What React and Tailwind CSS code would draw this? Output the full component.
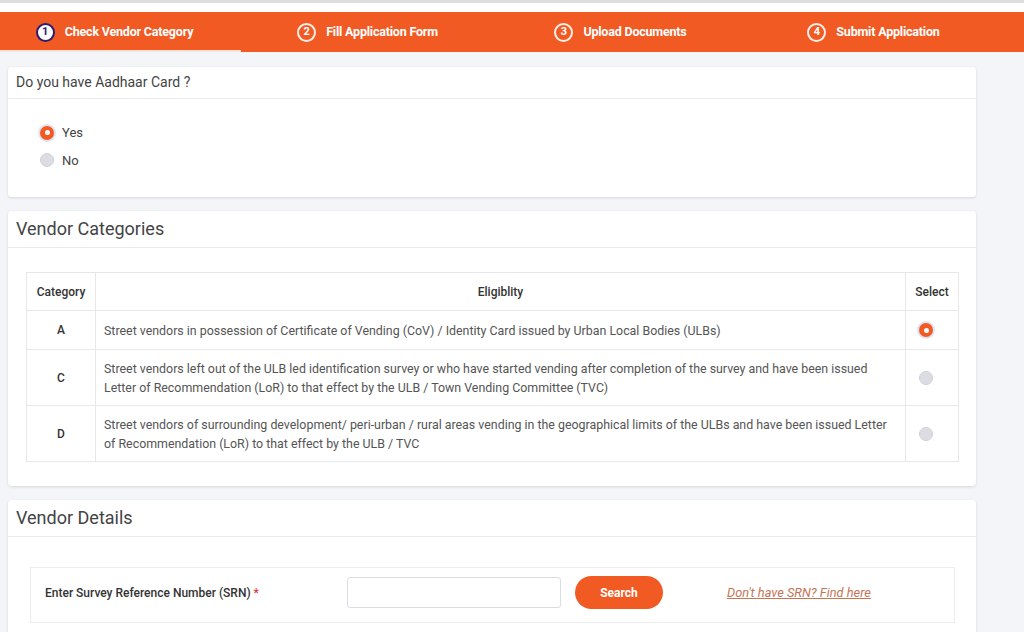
import React from "react";

const ORANGE = "bg-[#f15a22]";

function StepCircle({ n, active }) {
  return active ? (
    <span className="flex h-[19px] w-[19px] items-center justify-center rounded-full border-2 border-[#2b1d6e] bg-white text-[11px] font-bold text-[#2b1d6e]">
      {n}
    </span>
  ) : (
    <span className="flex h-[19px] w-[19px] items-center justify-center rounded-full border-2 border-white/90 text-[11px] font-bold text-white">
      {n}
    </span>
  );
}

function Radio({ checked }) {
  return checked ? (
    <span className="flex h-[14px] w-[14px] items-center justify-center rounded-full bg-[#f15a22] shadow-[0_0_0_2px_rgba(200,210,235,0.6)]">
      <span className="h-[5px] w-[5px] rounded-full bg-white" />
    </span>
  ) : (
    <span className="h-[14px] w-[14px] rounded-full border border-[#d0d2d8] bg-[#dcdde2]" />
  );
}

function Card({ title, big, children, className = "" }) {
  return (
    <div className={`rounded-[4px] bg-white shadow-[0_1px_3px_rgba(0,0,0,0.12)] ${className}`}>
      <div
        className={`border-b border-[#e9eaee] px-[8px] ${
          big ? "pt-[6px] pb-[6px] text-[18px] leading-[24px] text-[#444]" : "pt-[6px] pb-[7px] text-[14px] leading-[18px] text-[#444]"
        }`}
      >
        {title}
      </div>
      {children}
    </div>
  );
}

const rows = [
  {
    cat: "A",
    text: "Street vendors in possession of Certificate of Vending (CoV) / Identity Card issued by Urban Local Bodies (ULBs)",
    checked: true,
    h: "h-[39px]",
  },
  {
    cat: "C",
    text: "Street vendors left out of the ULB led identification survey or who have started vending after completion of the survey and have been issued Letter of Recommendation (LoR) to that effect by the ULB / Town Vending Committee (TVC)",
    checked: false,
    h: "h-[56px]",
  },
  {
    cat: "D",
    text: "Street vendors of surrounding development/ peri-urban / rural areas vending in the geographical limits of the ULBs and have been issued Letter of Recommendation (LoR) to that effect by the ULB / TVC",
    checked: false,
    h: "h-[56px]",
  },
];

export default function App() {
  return (
    <div
      className="h-[632px] w-[1024px] overflow-hidden bg-[#f4f5f9]"
      style={{ fontFamily: "Roboto, 'Liberation Sans', sans-serif" }}
    >
      {/* top strip */}
      <div className="h-[12px] border-t-[3px] border-[#dedede] bg-white" />
      {/* steps bar */}
      <div className={`${ORANGE} h-[40px] overflow-hidden`}>
        <div className="ml-[-12px] grid h-full w-[1012px] grid-cols-4">
          {[
            ["1", "Check Vendor Category"],
            ["2", "Fill Application Form"],
            ["3", "Upload Documents"],
            ["4", "Submit Application"],
          ].map(([n, label], i) => (
            <div
              key={n}
              className={`flex items-center justify-center gap-[10px] pt-[2px] ${
                i === 0 ? "border-b-[2px] border-[#fde3d6]" : "border-b-[2px] border-transparent"
              }`}
            >
              <StepCircle n={n} active={i === 0} />
              <span className="text-[12.5px] font-bold tracking-[-0.2px] text-white">{label}</span>
            </div>
          ))}
        </div>
      </div>

      <div className="flex w-[976px] flex-col gap-[14px] pl-[8px] pt-[15px]">
        {/* Aadhaar */}
        <Card title="Do you have Aadhaar Card ?" className="h-[130px]">
          <div className="flex flex-col gap-[8px] pl-[32px] pt-[24px] text-[13px] text-[#444]">
            <label className="flex items-center gap-[8px]">
              <Radio checked />
              <span>Yes</span>
            </label>
            <label className="flex items-center gap-[8px]">
              <Radio />
              <span>No</span>
            </label>
          </div>
        </Card>

        {/* Vendor Categories */}
        <Card title="Vendor Categories" big className="h-[275px]">
          <div className="pl-[18px] pr-[17px] pt-[24px]">
            <table className="w-full border-collapse text-[12px]">
              <thead>
                <tr className="h-[38px]">
                  <th className="w-[69px] border border-[#e6e7eb] font-medium text-[#333]">Category</th>
                  <th className="border border-[#e6e7eb] font-medium text-[#333]">Eligiblity</th>
                  <th className="w-[53px] border border-[#e6e7eb] font-medium text-[#333]">Select</th>
                </tr>
              </thead>
              <tbody>
                {rows.map((r) => (
                  <tr key={r.cat} className={r.h}>
                    <td className="border border-[#e6e7eb] text-center font-medium text-[#333]">{r.cat}</td>
                    <td className="border border-[#e6e7eb] pl-[8px] pr-[17px] text-[12.4px] leading-[19px] text-[#555]">{r.text}</td>
                    <td className="border border-[#e6e7eb]">
                      <div className="flex justify-center pr-[12px]">
                        <Radio checked={r.checked} />
                      </div>
                    </td>
                  </tr>
                ))}
              </tbody>
            </table>
          </div>
        </Card>

        {/* Vendor Details */}
        <Card title="Vendor Details" big className="h-[160px]">
          <div className="px-[22px] pt-[30px]">
            <div className="flex w-[925px] items-center border border-[#ececf0] pb-[13px] pl-[14px] pt-[8px]">
              <span className="w-[302px] text-[12px] font-medium text-[#333]">
                Enter Survey Reference Number (SRN) <span className="text-[#e53935]">*</span>
              </span>
              <input className="h-[31px] w-[214px] rounded-[3px] border border-[#dcdde2] bg-white" />
              <button className="ml-[14px] h-[33px] w-[88px] rounded-full bg-[#f15a22] text-[12px] font-bold text-white">
                Search
              </button>
              <a className="ml-[64px] text-[12.8px] italic text-[#c47556] underline">Don't have SRN? Find here</a>
            </div>
          </div>
        </Card>
      </div>
    </div>
  );
}
